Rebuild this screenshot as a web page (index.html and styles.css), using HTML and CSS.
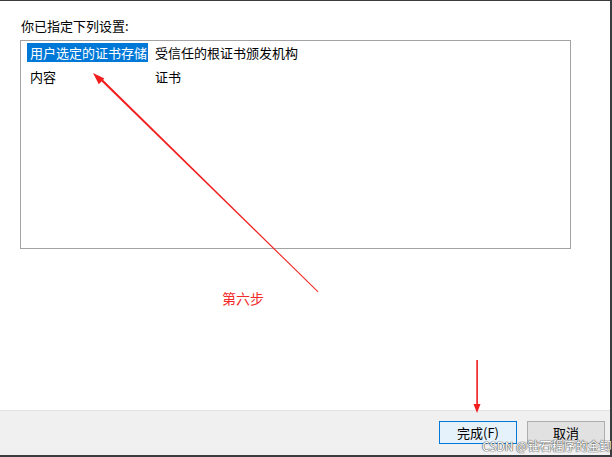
FILE: index.html
```html
<!DOCTYPE html>
<html lang="zh-CN">
<head>
  <meta charset="UTF-8" />
  <meta name="viewport" content="width=device-width, initial-scale=1.0"/>
  <title>证书导入向导</title>
  <link rel="stylesheet" href="styles.css">
</head>
<body>
  <div class="dialog">
    <div class="content">
      <p class="label">你已指定下列设置:</p>
      <div class="listbox">
        <div class="row">
          <span class="key selected">用户选定的证书存储</span>
          <span class="value">受信任的根证书颁发机构</span>
        </div>
        <div class="row">
          <span class="key">内容</span>
          <span class="value">证书</span>
        </div>
      </div>
    </div>

    <div class="footer">
      <button class="btn primary">完成(F)</button>
      <button class="btn">取消</button>
    </div>

    <!-- annotation layer drawn over the screenshot -->
    <svg class="marks" width="612" height="457" viewBox="0 0 612 457">
      <polygon points="97.6,77.6 99.2,76.0 318.4,291.6 317.8,292.2" fill="#f21d1d"/>
      <polygon points="93,73 104.4,78.5 98.8,84.3" fill="#f21d1d"/>
      <rect x="476.3" y="360" width="1.6" height="46" fill="#f21d1d"/>
      <polygon points="477,413 473.5,404 480.5,404" fill="#f21d1d"/>
    </svg>
    <span class="step">第六步</span>
    <span class="watermark">CSDN @钻石程序的金鲫</span>
  </div>
</body>
</html>
```

FILE: styles.css
```css
body {
  margin: 0;
  padding: 0;
  background: #fff;
  font-family: "Noto Sans CJK SC", "Noto Sans", sans-serif;
  font-size: 13px;
  color: #000;
}

.dialog {
  position: relative;
  width: 612px;
  height: 457px;
  box-sizing: border-box;
  border-top: 1px solid #3a3a3a;
  border-right: 2px solid #3a3d40;
  border-bottom: 2px solid #3a3d40;
  display: flex;
  flex-direction: column;
  background: #fff;
}

.content {
  flex: 1;
  padding: 17px 0 0 20px;
}

.label {
  margin: 0 0 6px 1px;
  line-height: 16px;
}

.listbox {
  width: 551px;
  height: 209px;
  box-sizing: border-box;
  border: 1px solid #a3a3a3;
  padding: 2px 0 0 6px;
}

.row {
  display: flex;
  height: 24px;
}

.key {
  width: 128px;
  height: 19px;
  line-height: 19px;
  padding-left: 3px;
  box-sizing: border-box;
}

.key.selected {
  width: 121px;
  margin-right: 7px;
  background: #0078d7;
  color: #fff;
}

.value {
  line-height: 19px;
}

.footer {
  height: 45px;
  background: #f0f0f0;
  border-top: 1px solid #e3e3e3;
  display: flex;
  justify-content: flex-end;
  align-items: flex-start;
  gap: 10px;
  padding: 10px 5px 0 0;
  box-sizing: border-box;
}

.btn {
  width: 78px;
  height: 23px;
  padding: 0;
  font-family: inherit;
  font-size: 13px;
  color: #000;
  background: #e1e1e1;
  border: 1px solid #adadad;
}

.btn.primary {
  background: #e5f1fb;
  border: 1px solid #0078d7;
}

.marks {
  position: absolute;
  left: 0;
  top: -1px;
  pointer-events: none;
}

.step {
  position: absolute;
  left: 222px;
  top: 288px;
  color: #f22b2b;
  font-size: 14px;
  line-height: 18px;
}

.watermark {
  position: absolute;
  left: 482px;
  top: 438px;
  white-space: nowrap;
  font-size: 12px;
  line-height: 14px;
  color: #fff;
  text-shadow: 0 0 1px #555, 0 0 1px #555, 0 0 1px #555;
}
```
